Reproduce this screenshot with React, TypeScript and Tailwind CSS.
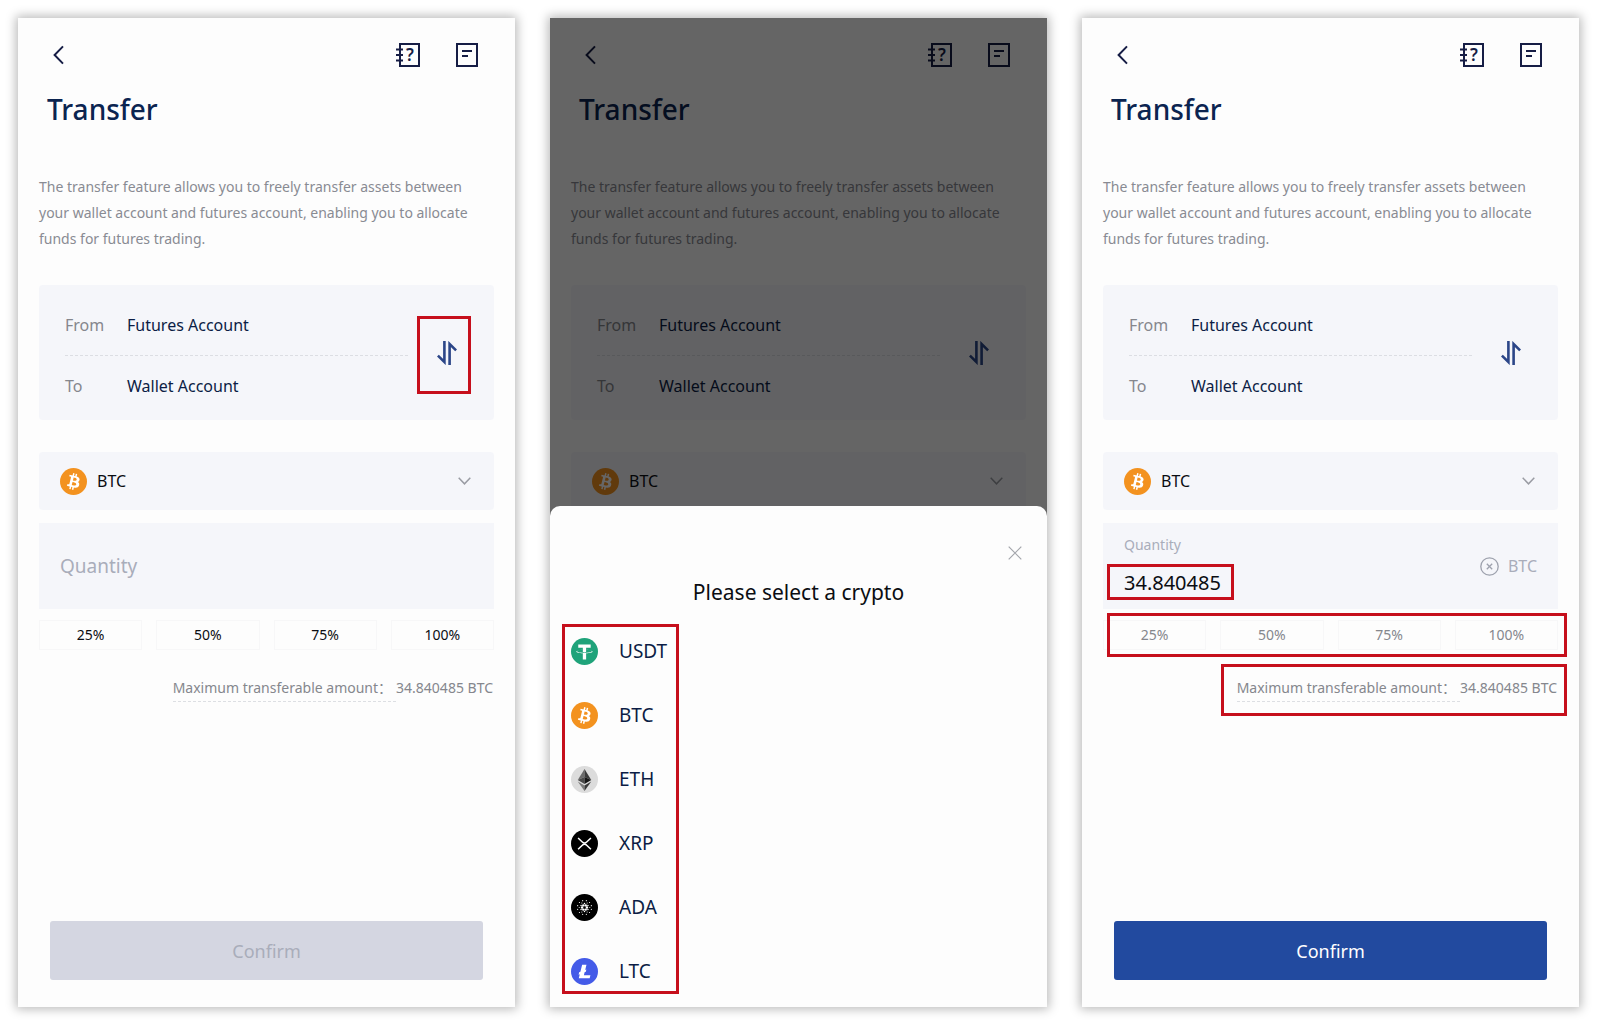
import { useState } from "react";

type Variant = "empty" | "picking" | "filled";

const coins = ["USDT", "BTC", "ETH", "XRP", "ADA", "LTC"];
const percents = [25, 50, 75, 100];
const balance = "34.840485";

// rings of dots for the Cardano logo
const ring = (count: number, radius: number, turn: number) =>
  Array.from({ length: count }, (_, i) => {
    const a = ((i * 360) / count + turn) * (Math.PI / 180);
    return { x: 16 + radius * Math.cos(a), y: 16 + radius * Math.sin(a) };
  });

function CoinIcon({ symbol }: { symbol: string }) {
  return (
    <svg viewBox="0 0 32 32" className="size-[27px] shrink-0" aria-hidden="true">
      {symbol === "USDT" && (
        <>
          <circle cx="16" cy="16" r="16" fill="#1fa37a" />
          <path
            fill="#fff"
            d="M17.922 17.383v-.002c-.11.008-.677.042-1.942.042-1.01 0-1.721-.03-1.971-.042v.003c-3.888-.171-6.79-.848-6.79-1.658 0-.809 2.902-1.486 6.79-1.66v2.644c.254.018.982.061 1.988.061 1.207 0 1.812-.05 1.925-.06v-2.643c3.88.173 6.775.85 6.775 1.658 0 .81-2.895 1.485-6.775 1.657m0-3.59v-2.366h5.414V7.819H8.595v3.608h5.414v2.365c-4.4.202-7.709 1.074-7.709 2.118 0 1.044 3.309 1.915 7.709 2.118v7.582h3.913v-7.584c4.393-.202 7.694-1.073 7.694-2.116 0-1.043-3.301-1.914-7.694-2.117"
          />
        </>
      )}
      {symbol === "BTC" && (
        <>
          <circle cx="16" cy="16" r="16" fill="#f3921f" />
          <path
            fill="#fff"
            d="M23.189 14.02c.314-2.096-1.283-3.223-3.465-3.975l.708-2.84-1.728-.43-.69 2.765c-.454-.114-.92-.22-1.385-.326l.695-2.783L15.596 6l-.708 2.839c-.376-.086-.746-.17-1.104-.26l.002-.009-2.384-.595-.46 1.846s1.283.294 1.256.312c.7.175.826.638.805 1.006l-.806 3.235c.048.012.11.03.18.057l-.183-.045-1.13 4.532c-.086.212-.303.531-.793.41.018.025-1.256-.313-1.256-.313l-.858 1.978 2.25.561c.418.105.828.215 1.231.318l-.715 2.872 1.727.43.708-2.84c.472.127.93.245 1.378.357l-.706 2.828 1.728.43.715-2.866c2.948.558 5.164.333 6.097-2.333.752-2.146-.037-3.385-1.588-4.192 1.13-.26 1.98-1.003 2.207-2.538zm-3.95 5.538c-.533 2.147-4.148.986-5.32.695l.95-3.805c1.172.293 4.929.872 4.37 3.11zm.535-5.569c-.487 1.953-3.495.96-4.47.717l.86-3.45c.975.243 4.118.696 3.61 2.733z"
          />
        </>
      )}
      {symbol === "ETH" && (
        <>
          <circle cx="16" cy="16" r="16" fill="#dcdcdc" />
          <path fill="#6b6b6b" d="M16 3.5 8 16.6l8-3.5z" />
          <path fill="#3a3a3a" d="m16 3.5 8 13.1-8-3.5z" />
          <path fill="#4a4a4a" d="m8 16.6 8-3.5v8.2z" />
          <path fill="#161616" d="m24 16.6-8-3.5v8.2z" />
          <path fill="#7c7c7c" d="m8 18.4 8 4.8v6.3z" />
          <path fill="#3a3a3a" d="m24 18.4-8 4.8v6.3z" />
        </>
      )}
      {symbol === "XRP" && (
        <>
          <circle cx="16" cy="16" r="16" fill="#000" />
          <g fill="none" stroke="#fff" strokeWidth="1.8">
            <path d="m8.4 9.4 5 4.8a3.8 3.8 0 0 0 5.2 0l5-4.8" />
            <path d="m8.4 22.8 5-4.8a3.8 3.8 0 0 1 5.2 0l5 4.8" />
          </g>
        </>
      )}
      {symbol === "ADA" && (
        <>
          <circle cx="16" cy="16" r="16" fill="#000" />
          <g fill="#fff">
            {ring(6, 2.9, 0).map((p, i) => <circle key={i} cx={p.x} cy={p.y} r="1.4" />)}
            {ring(6, 4.7, 30).map((p, i) => <circle key={i} cx={p.x} cy={p.y} r="0.9" />)}
            {ring(6, 6.3, 0).map((p, i) => <circle key={i} cx={p.x} cy={p.y} r="0.6" />)}
            {ring(12, 8.4, 15).map((p, i) => <circle key={i} cx={p.x} cy={p.y} r="0.7" />)}
          </g>
        </>
      )}
      {symbol === "LTC" && (
        <>
          <circle cx="16" cy="16" r="16" fill="#445be8" />
          <path
            fill="#fff"
            d="M10.427 19.214L9 19.768l.688-2.759 1.444-.58L13.213 8h5.129l-1.519 6.196 1.41-.571-.68 2.75-1.427.571-.848 3.483H23L22.127 24H9.252z"
          />
        </>
      )}
    </svg>
  );
}

function Header() {
  return (
    <header className="flex items-center justify-between pt-[25px] pr-[37px] pl-[35px] text-[#161d45]">
      <button aria-label="Back">
        <svg width="11" height="20" viewBox="0 0 11 20" fill="none" stroke="currentColor" strokeWidth="2">
          <path d="M10 1.4 1.6 10l8.4 8.6" />
        </svg>
      </button>
      <div className="flex gap-9">
        <button aria-label="Help">
          <svg width="24" height="24" viewBox="0 0 24 24" fill="none" stroke="currentColor" strokeWidth="2">
            <path d="M4 1h19v22H4zM0 6.5h7M0 12h7M0 17.5h7" />
            <text x="14" y="18" textAnchor="middle" fontSize="17" fontWeight="600" fill="currentColor" stroke="none">
              ?
            </text>
          </svg>
        </button>
        <button aria-label="Records">
          <svg width="22" height="24" viewBox="0 0 22 24" fill="none" stroke="currentColor" strokeWidth="2">
            <path d="M1 1h20v22H1zM6 8h10M6 13h6" />
          </svg>
        </button>
      </div>
    </header>
  );
}

function AccountCard({ marked }: { marked: boolean }) {
  return (
    <div className="mt-[33px] flex items-center gap-[29px] rounded bg-[#f5f6fa] pr-[37px] pl-[26px]">
      <dl className="flex-1 pt-7 pb-[22px] text-base text-[#0c1d45]">
        <div className="flex">
          <dt className="w-[62px] text-[#85878d]">From</dt>
          <dd>Futures Account</dd>
        </div>
        <div className="mt-[18px] flex border-t border-dashed border-[#dcdee3] pt-[18px]">
          <dt className="w-[62px] text-[#85878d]">To</dt>
          <dd>Wallet Account</dd>
        </div>
      </dl>
      <button aria-label="Swap accounts" className="relative">
        <svg width="20" height="24" viewBox="0 0 20 24" fill="none" stroke="#2c4688" strokeWidth="2.6">
          <path d="M7.4 0v21L.9 14.6M12.6 24V3l6.5 6.4" />
        </svg>
        {marked && <span className="absolute -top-[25px] -right-[14px] -bottom-[29px] -left-5 border-3 border-[#c60f1c]" />}
      </button>
    </div>
  );
}

function CoinSelect() {
  const [coin, setCoin] = useState("BTC");
  return (
    <label className="mt-8 flex h-[58px] items-center rounded bg-[#f5f6fa] pr-[23px] pl-[21px]">
      <CoinIcon symbol={coin} />
      <select
        aria-label="Crypto"
        value={coin}
        onChange={(e) => setCoin(e.target.value)}
        className="ml-[10px] flex-1 appearance-none bg-transparent text-base text-[#0b0d12] outline-none"
      >
        {coins.map((c) => (
          <option key={c}>{c}</option>
        ))}
      </select>
      <svg width="13" height="8" viewBox="0 0 13 8" fill="none" stroke="#9a9ca3" strokeWidth="1.5">
        <path d="m.7.8 5.8 6 5.800-6" />
      </svg>
    </label>
  );
}

function QuantityField({ filled }: { filled: boolean }) {
  const [quantity, setQuantity] = useState(filled ? balance : "");

  if (!filled) {
    return (
      <div className="mt-[13px] flex h-[86px] items-center bg-[#f5f6fa] px-[21px]">
        <input
          aria-label="Quantity"
          placeholder="Quantity"
          value={quantity}
          onChange={(e) => setQuantity(e.target.value)}
          className="w-full bg-transparent text-[19px] leading-7 outline-none placeholder:text-[#a9adba]"
        />
      </div>
    );
  }

  return (
    <div className="mt-[13px] flex h-[86px] items-center justify-between bg-[#f5f6fa] px-[21px]">
      <div>
        <label htmlFor="quantity" className="block text-sm text-[#a9adba]">
          Quantity
        </label>
        <div className="relative mt-[14px] w-[110px]">
          <input
            id="quantity"
            value={quantity}
            onChange={(e) => setQuantity(e.target.value)}
            className="block w-full bg-transparent text-xl leading-7 text-[#0b0d12] outline-none"
          />
          <span className="pointer-events-none absolute -top-[5px] right-0 -bottom-[3px] -left-[17px] border-3 border-[#c60f1c]" />
        </div>
      </div>
      <div className="flex items-center gap-[9px] text-base text-[#a9adba]">
        <button aria-label="Clear" onClick={() => setQuantity("")}>
          <svg width="19" height="19" viewBox="0 0 19 19" fill="none" stroke="#9da1ad" strokeWidth="1.3">
            <circle cx="9.5" cy="9.5" r="8.7" />
            <path d="m6.8 6.8 5.4 5.4M12.2 6.8l-5.4 5.4" />
          </svg>
        </button>
        BTC
      </div>
    </div>
  );
}

function CoinSheet() {
  return (
    <div className="absolute inset-0 flex flex-col justify-end bg-black/60">
      {/* BOTTOM SHEET */}
      <div className="rounded-t-[10px] bg-[#fdfdfd] pt-10 pb-[13px]">
        <div className="flex justify-end px-[25px]">
          <button aria-label="Close">
            <svg width="14" height="14" viewBox="0 0 14 14" fill="none" stroke="#a3a5ab" strokeWidth="1.2">
              <path d="m.7.7 12.6 12.6M13.3.7.7 13.3" />
            </svg>
          </button>
        </div>
        <h2 className="mt-4 text-center text-[21px] leading-8 text-[#0b0d12]">Please select a crypto</h2>
        <ul className="mt-4 ml-3 w-[117px] border-3 border-[#c60f1c] px-[6px] pt-[10px] pb-[6px]">
          {coins.map((c) => (
            <li key={c} className="pb-9 last:pb-0">
              <button className="flex h-7 items-center gap-[21px] text-[19px] text-[#0c1d45]">
                <CoinIcon symbol={c} />
                {c}
              </button>
            </li>
          ))}
        </ul>
      </div>
    </div>
  );
}

function TransferScreen({ variant }: { variant: Variant }) {
  const filled = variant === "filled";
  return (
    <section className="relative flex flex-col bg-[#fdfdfd] shadow-[0_0_10px_2px_rgba(0,0,0,0.28)]">
      <Header />
      <h1 className="mt-6 pl-[29px] text-[28px] leading-9 font-medium text-[#0b2450]">Transfer</h1>

      <div className="px-[21px]">
        <p className="mt-[47px] text-sm leading-[26px] text-[#898b93]">
          The transfer feature allows you to freely transfer assets between your wallet account and futures
          account, enabling you to allocate funds for futures trading.
        </p>
        <AccountCard marked={variant === "empty"} />
        <CoinSelect />

        {variant !== "picking" && (
          <>
            <QuantityField filled={filled} />

            {/* SHORTCUTS */}
            <div className="relative mt-[11px] grid grid-cols-4 gap-[14px]">
              {percents.map((p) => (
                <button
                  key={p}
                  className={`h-[30px] border border-[#f7f7f8] text-sm ${filled ? "text-[#85878d]" : "text-[#0b0d12]"}`}
                >
                  {p}%
                </button>
              ))}
              {filled && (
                <span className="pointer-events-none absolute -top-[7px] -right-[9px] -bottom-[7px] left-1 border-3 border-[#c60f1c]" />
              )}
            </div>

            <div className="mt-7 flex justify-end">
              <p className="relative flex items-start pr-px text-sm text-[#85878d]">
                <span className="border-b border-dashed border-[#dddfe3] pr-1 pb-[3px]">
                  Maximum transferable amount：
                </span>
                <span>{balance} BTC</span>
                {filled && (
                  <span className="pointer-events-none absolute -top-[14px] -right-[9px] -bottom-[14px] -left-4 border-3 border-[#c60f1c]" />
                )}
              </p>
            </div>
          </>
        )}
      </div>

      {variant !== "picking" && (
        <div className="mt-auto px-8 pt-8 pb-[27px]">
          <button
            disabled={!filled}
            className={`h-[59px] w-full rounded-[3px] text-lg ${
              filled ? "bg-[#224a9f] text-white" : "bg-[#d4d6e1] text-[#a9adba]"
            }`}
          >
            Confirm
          </button>
        </div>
      )}

      {variant === "picking" && <CoinSheet />}
    </section>
  );
}

export default function App() {
  return (
    <main className="grid min-h-screen grid-cols-3 gap-[35px] bg-white px-[18px] pt-[18px] pb-[17px] font-['Noto_Sans','Noto_Sans_CJK_SC',sans-serif]">
      <TransferScreen variant="empty" />
      <TransferScreen variant="picking" />
      <TransferScreen variant="filled" />
    </main>
  );
}
